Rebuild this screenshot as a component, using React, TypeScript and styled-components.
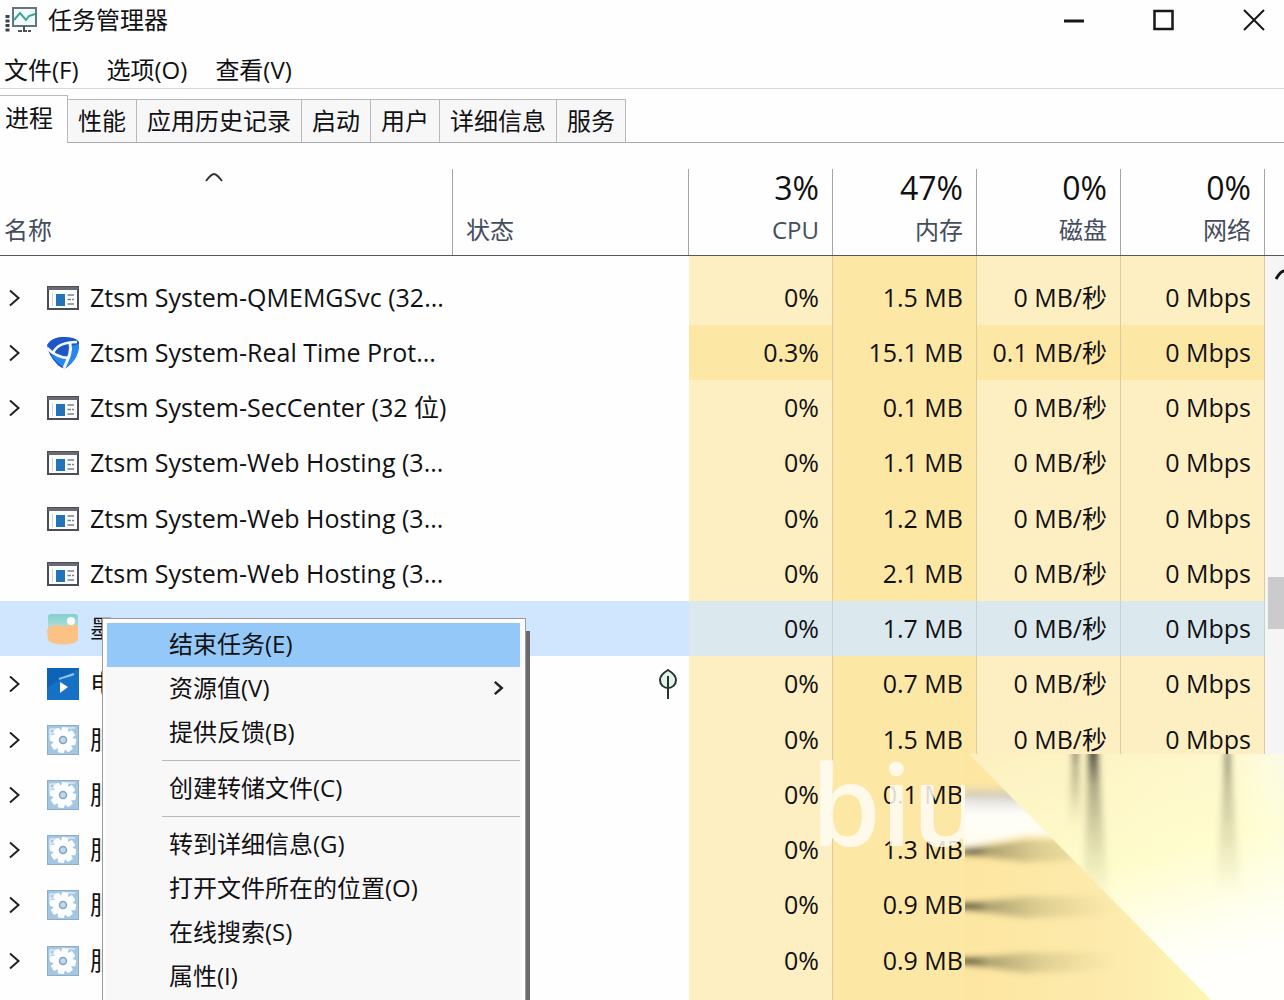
import React from "react";
import styled, { createGlobalStyle, css } from "styled-components";

const uiFont = `"Open Sans", "Noto Sans CJK SC", sans-serif`;

const GlobalStyle = createGlobalStyle`
  *, *::before, *::after { box-sizing: border-box; }
  html, body { margin: 0; height: 100%; overflow: hidden; }
  body { background: #fefefe; color: #111114; font-family: ${uiFont}; font-size: 24px; line-height: 32px; }
  #root { height: 100%; }
  button { font: inherit; color: inherit; background: none; border: 0; padding: 0; margin: 0; text-align: left; }
`;

const Window = styled.main`
  position: relative;
  display: flex;
  flex-direction: column;
  height: 100vh;
  overflow: hidden;
`;

const TitleBar = styled.header`
  display: flex;
  align-items: center;
  height: 40px;
  padding-left: 4px;
  gap: 10px;
`;

const Title = styled.h1`
  flex: 1;
  margin: 0;
  font-size: 24px;
  font-weight: 400;
`;

const WindowButton = styled.button`
  display: flex;
  align-items: center;
  justify-content: center;
  width: 60px;
  height: 40px;
`;

const WindowButtons = styled.div`
  display: flex;
  gap: 30px;
`;

const MenuBar = styled.nav`
  display: flex;
  align-items: center;
  gap: 28px;
  height: 49px;
  padding: 12px 4px 0;
  border-bottom: 1px solid #d9d9dc;
`;

const Tabs = styled.div`
  display: flex;
  align-items: flex-end;
  height: 54px;
  padding-top: 6px;
  &::after {
    content: "";
    flex: 1;
    border-bottom: 1px solid #a9a9ac;
  }
`;

const Tab = styled.button<{ $active?: boolean }>`
  height: 44px;
  padding: 0 10px;
  border: 1px solid #b9b9bc;
  border-left: 0;
  border-bottom-color: #a9a9ac;
  background: #f7f7f7;
  white-space: nowrap;
  ${(p) =>
    p.$active &&
    css`
      height: 48px;
      padding: 0 14px 4px 5px;
      border-bottom: 0;
      background: #fefefe;
    `}
`;

const Body = styled.section`
  display: flex;
  flex: 1;
  min-height: 0;
  overflow: hidden;
`;

const Table = styled.table`
  flex: 1;
  min-width: 0;
  table-layout: fixed;
  border-collapse: separate;
  border-spacing: 0;
  align-self: flex-start;
`;

const Col = styled.col<{ $width?: number }>`
  width: ${(p) => (p.$width ? `${p.$width}px` : "auto")};
`;

const HeadCell = styled.th<{ $metric?: boolean }>`
  height: 113px;
  padding: 0;
  border-bottom: 1px solid #55555a;
  font-weight: 400;
  text-align: ${(p) => (p.$metric ? "right" : "left")};
  vertical-align: bottom;
`;

const HeadInner = styled.div<{ $first?: boolean }>`
  display: flex;
  flex-direction: column;
  justify-content: space-between;
  height: 86px;
  padding: ${(p) => (p.$first ? "0 13px 9px 4px" : "0 13px 9px")};
  border-right: 1px solid #a4a4aa;
`;

const Total = styled.span`
  font-size: 32px;
  line-height: 38px;
`;

const HeadLabel = styled.span`
  color: #454d5c;
  line-height: 32px;
`;

const SortMark = styled.span`
  display: flex;
  justify-content: center;
  height: 16px;
  padding-top: 3px;
  padding-right: 16px;
`;

const Row = styled.tr<{ $selected?: boolean }>`
  height: 55px;
  background: ${(p) => (p.$selected ? "#cfe6fe" : "transparent")};
  &:nth-child(4n + 1) {
    height: 56px;
  }
  &:first-child,
  &:last-child {
    height: 14px;
  }
`;

const tones = {
  low: "#fdefc1",
  mid: "#fde7a4",
  selected: "#dbe9ee",
};

const Cell = styled.td`
  padding: 0;
  overflow: hidden;
  white-space: nowrap;
`;

const Value = styled(Cell)<{ $tone: keyof typeof tones }>`
  padding: 0 13px 2px 0;
  font-size: 25px;
  text-align: right;
  background: ${(p) => tones[p.$tone]};
  border-right: 1px solid ${(p) => (p.$tone === "selected" ? "#c5d3d3" : "#dccb9c")};
`;

const NameLine = styled.div`
  display: grid;
  grid-template-columns: 32px 32px 1fr;
  column-gap: 11px;
  align-items: center;
  padding-left: 4px;
`;

const NameText = styled.span`
  padding-bottom: 2px;
  font-size: 25px;
`;

const StatusLine = styled.div`
  display: flex;
  justify-content: flex-end;
  padding-right: 11px;
`;

const Expand = styled.button`
  display: flex;
  padding-left: 4px;
`;

const ScrollBar = styled.aside`
  display: flex;
  flex-direction: column;
  width: 19px;
  background: #f5f5f6;
`;

const ScrollHead = styled.div`
  height: 113px;
  border-bottom: 1px solid #55555a;
  background: #fefefe;
`;

const ScrollUp = styled.button`
  display: flex;
  height: 40px;
  padding: 12px 0 0 10px;
  overflow: hidden;
  svg {
    flex-shrink: 0;
  }
`;

const ScrollThumb = styled.div`
  height: 52px;
  margin: 281px 0 0 3px;
  background: #cbcbcd;
`;

const ContextMenu = styled.div`
  position: absolute;
  left: 102px;
  top: 618px;
  width: 424px;
  padding: 4px 5px 4px 4px;
  border: 1px solid #9a9a9e;
  background: #f9f8f9;
  box-shadow: inset 0 0 0 3px #fdfdfd, 5px 12px 0 -1px #6a6a6e;
`;

const MenuItem = styled.button<{ $active?: boolean }>`
  display: flex;
  align-items: center;
  justify-content: space-between;
  width: 100%;
  height: 44px;
  padding: 0 16px 2px 62px;
  background: ${(p) => (p.$active ? "#94c8f8" : "transparent")};
`;

const Separator = styled.hr`
  height: 1px;
  margin: 5px 0 6px 55px;
  border: 0;
  background: #b9b9bc;
`;

const Smear = styled.svg`
  position: absolute;
  left: 965px;
  top: 754px;
  width: 319px;
  height: 246px;
`;

const Watermark = styled.div`
  position: absolute;
  left: 811px;
  top: 758px;
  color: #fffdf4;
  opacity: 0.85;
  font-size: 112px;
  font-weight: 600;
  line-height: 90px;
`;

const Chevron = ({ size = 22, weight = 2 }: { size?: number; weight?: number }) => (
  <svg width={size / 2 + 2} height={size} viewBox="0 0 13 22" fill="none" stroke="#222226" strokeWidth={weight}>
    <path d="M2 3.500 L10.500 11 L2 18.500" />
  </svg>
);

const AppGlyph = () => (
  <svg width="32" height="24" viewBox="0 0 32 24">
    <rect x="1" y="1" width="30" height="22" fill="#fbfcfd" stroke="#4b4c55" strokeWidth="2" />
    <path d="M1 2.500H31" stroke="#6a6a70" strokeWidth="3" />
    <path d="M5.500 7V20" stroke="#c8d5de" />
    <rect x="9" y="8" width="9" height="12" fill="#2473b8" />
    <path d="M20.500 9H27M20.500 13.500H24M25 13.500H27M20.500 18H27" stroke="#7b8288" strokeWidth="1.500" />
  </svg>
);

const ShieldGlyph = () => (
  <svg width="32" height="32" viewBox="0 0 32 32">
    <path d="M0 8 C4 1 11 0 16 0 C23 0 30 1 32 5 C33 15 28 25 19 31 C16 32 12 30 9 26 C4 21 1 15 0 8Z" fill="#1c56c8" />
    <path d="M4 18 C9 25 14 28 17 31 C27 27 32 17 32 7 L25 9 L19 22Z" fill="#2787ee" />
    <path d="M0 11 C5 16 11 21 22 21" fill="none" stroke="#f4faff" strokeWidth="3" />
    <path d="M6 16 C9 9 16 5 30 5" fill="none" stroke="#f4faff" strokeWidth="2.500" />
    <path d="M23 6 C25 15 21 22 17 31" fill="none" stroke="#f4faff" strokeWidth="3" />
  </svg>
);

const PhotoGlyph = () => (
  <svg width="32" height="32" viewBox="0 0 32 32">
    <defs>
      <linearGradient id="sky" x1="0" y1="0" x2="0" y2="1">
        <stop offset="0" stopColor="#84ced1" />
        <stop offset="1" stopColor="#d3ead8" />
      </linearGradient>
    </defs>
    <rect x="1" y="1" width="30" height="24" rx="3" fill="url(#sky)" />
    <path d="M0 18 C3 10 12 12 17 14 C22 11 30 10 31 15 V27 C27 33 5 33 1 27Z" fill="#fcc184" />
    <circle cx="24" cy="8" r="4" fill="#fdfefa" />
  </svg>
);

const MovieGlyph = () => (
  <svg width="32" height="32" viewBox="0 0 32 32">
    <rect width="32" height="32" fill="#0c63b8" />
    <path d="M0 20 L32 0 V32 H0Z" fill="#1670c4" />
    <path d="M12 11 C17 9 22 8 27 6" fill="none" stroke="#8fc3f0" strokeWidth="2" />
    <path d="M13 14 L21 19 L13 25Z" fill="#fff" />
  </svg>
);

const GearGlyph = () => (
  <svg width="32" height="32" viewBox="0 0 32 32">
    <rect x="0.500" y="1.500" width="31" height="29" fill="#a3c6e2" stroke="#8eacc5" />
    <path d="M3 5H13M3 9H8M3 5V15M20 4H28" fill="none" stroke="#dceaf5" strokeWidth="1.500" />
    <g transform="translate(16 16)" fill="#fbfdff">
      {[10, 55, 100, 145].map((a) => (
        <path key={a} d="M-3 -13H3L4 -7V7L3 13H-3L-4 7V-7Z" transform={`rotate(${a})`} />
      ))}
      <circle r="8.500" />
      <circle r="3.500" fill="#c3d8e8" stroke="#83a3bd" strokeWidth="1.500" />
    </g>
  </svg>
);

const LeafGlyph = () => (
  <svg width="20" height="32" viewBox="0 0 20 32" fill="none" stroke="#26352d" strokeWidth="2">
    <path d="M10 2 C15 5 18 8 18 12 C18 17 14 20 10 20 C6 20 2 17 2 12 C2 8 5 5 10 2Z" fill="#e4f3ea" />
    <path d="M10 8V31" />
  </svg>
);

const TaskManagerGlyph = () => (
  <svg width="34" height="28" viewBox="0 0 34 28" fill="none">
    <path d="M3.500 9V27" stroke="#3d4347" strokeWidth="4" strokeDasharray="3 1.500" />
    <rect x="9" y="2" width="23" height="18" fill="#f2fbfb" stroke="#62767f" strokeWidth="2" />
    <path d="M10 14 L16 7 L22 14 L25 10 L31 8" stroke="#3ba598" strokeWidth="2" />
    <path d="M20 20V24M14 25H27" stroke="#4a5459" strokeWidth="2" strokeDasharray="4 1" />
  </svg>
);

const glyphs = {
  app: AppGlyph,
  shield: ShieldGlyph,
  photo: PhotoGlyph,
  movie: MovieGlyph,
  gear: GearGlyph,
};

type Process = {
  name: string;
  glyph: keyof typeof glyphs;
  expandable?: boolean;
  selected?: boolean;
  busy?: boolean;
  leaf?: boolean;
  values: string[];
};

const processes: Process[] = [
  { name: "Ztsm System-QMEMGSvc (32...", glyph: "app", expandable: true, values: ["0%", "1.5 MB", "0 MB/秒", "0 Mbps"] },
  { name: "Ztsm System-Real Time Prot...", glyph: "shield", expandable: true, busy: true, values: ["0.3%", "15.1 MB", "0.1 MB/秒", "0 Mbps"] },
  { name: "Ztsm System-SecCenter (32 位)", glyph: "app", expandable: true, values: ["0%", "0.1 MB", "0 MB/秒", "0 Mbps"] },
  { name: "Ztsm System-Web Hosting (3...", glyph: "app", values: ["0%", "1.1 MB", "0 MB/秒", "0 Mbps"] },
  { name: "Ztsm System-Web Hosting (3...", glyph: "app", values: ["0%", "1.2 MB", "0 MB/秒", "0 Mbps"] },
  { name: "Ztsm System-Web Hosting (3...", glyph: "app", values: ["0%", "2.1 MB", "0 MB/秒", "0 Mbps"] },
  { name: "墨", glyph: "photo", selected: true, values: ["0%", "1.7 MB", "0 MB/秒", "0 Mbps"] },
  { name: "电", glyph: "movie", expandable: true, leaf: true, values: ["0%", "0.7 MB", "0 MB/秒", "0 Mbps"] },
  { name: "服", glyph: "gear", expandable: true, values: ["0%", "1.5 MB", "0 MB/秒", "0 Mbps"] },
  { name: "服", glyph: "gear", expandable: true, values: ["0%", "0.1 MB", "", ""] },
  { name: "服", glyph: "gear", expandable: true, values: ["0%", "1.3 MB", "", ""] },
  { name: "服", glyph: "gear", expandable: true, values: ["0%", "0.9 MB", "", ""] },
  { name: "服", glyph: "gear", expandable: true, values: ["0%", "0.9 MB", "", ""] },
];

const metrics = [
  ["3%", "CPU"],
  ["47%", "内存"],
  ["0%", "磁盘"],
  ["0%", "网络"],
];

const menuGroups = [
  ["结束任务(E)", "资源值(V)", "提供反馈(B)"],
  ["创建转储文件(C)"],
  ["转到详细信息(G)", "打开文件所在的位置(O)", "在线搜索(S)", "属性(I)"],
];

const toneOf = (p: Process, column: number): keyof typeof tones =>
  p.selected ? "selected" : column === 1 || p.busy ? "mid" : "low";

function ProcessRow({ process }: { process: Process }) {
  const Glyph = glyphs[process.glyph];
  return (
    <Row $selected={process.selected}>
      <Cell>
        <NameLine>
          {process.expandable ? (
            <Expand aria-label="展开">
              <Chevron />
            </Expand>
          ) : (
            <span />
          )}
          <Glyph />
          <NameText>{process.name}</NameText>
        </NameLine>
      </Cell>
      <Cell>
        <StatusLine>{process.leaf && <LeafGlyph />}</StatusLine>
      </Cell>
      {process.values.map((value, i) => (
        <Value key={i} $tone={toneOf(process, i)}>
          {value}
        </Value>
      ))}
    </Row>
  );
}

function PartialRow() {
  return (
    <Row>
      <Cell />
      <Cell />
      <Value $tone="low" />
      <Value $tone="mid" />
      <Value $tone="low" />
      <Value $tone="low" />
    </Row>
  );
}

function SmearDrawing() {
  return (
    <Smear viewBox="0 0 319 246" aria-hidden="true">
      <defs>
        <linearGradient id="right" x1="0" y1="0" x2="1" y2="0">
          <stop offset="0" stopColor="#fdefbf" />
          <stop offset="0.450" stopColor="#fdf2c2" />
          <stop offset="0.850" stopColor="#fef4cc" />
          <stop offset="0.950" stopColor="#fcf9ec" />
          <stop offset="1" stopColor="#f6f6fa" />
        </linearGradient>
        <linearGradient id="fade" x1="0" y1="0" x2="0.350" y2="1">
          <stop offset="0" stopColor="#ffffd2" stopOpacity="0" />
          <stop offset="0.550" stopColor="#ffffce" stopOpacity="0.750" />
          <stop offset="0.850" stopColor="#fffff0" />
          <stop offset="1" stopColor="#fffffb" />
        </linearGradient>
        <linearGradient id="left" x1="0" y1="0" x2="1" y2="0">
          <stop offset="0" stopColor="#fde6a0" />
          <stop offset="0.500" stopColor="#fdebae" />
          <stop offset="1" stopColor="#ffffb8" />
        </linearGradient>
        <linearGradient id="sideways" gradientUnits="userSpaceOnUse" x1="0" y1="0" x2="150" y2="0">
          <stop offset="0" stopColor="#2c2a1c" stopOpacity="0.950" />
          <stop offset="0.160" stopColor="#77734e" stopOpacity="0.600" />
          <stop offset="0.500" stopColor="#a39c68" stopOpacity="0.350" />
          <stop offset="1" stopColor="#b8b079" stopOpacity="0" />
        </linearGradient>
        <linearGradient id="down" x1="0" y1="0" x2="0" y2="1">
          <stop offset="0" stopColor="#1e1d18" stopOpacity="0.950" />
          <stop offset="0.250" stopColor="#79765a" stopOpacity="0.600" />
          <stop offset="1" stopColor="#c8c48e" stopOpacity="0" />
        </linearGradient>
        <linearGradient id="glare" x1="0" y1="0" x2="0" y2="1">
          <stop offset="0" stopColor="#c9c5b8" stopOpacity="0.100" />
          <stop offset="0.200" stopColor="#e2e0dc" />
          <stop offset="0.450" stopColor="#fffef8" />
          <stop offset="1" stopColor="#fffdf0" />
        </linearGradient>
        <filter id="softX" x="-100%" y="-20%" width="300%" height="140%">
          <feGaussianBlur stdDeviation="3 1" />
        </filter>
        <filter id="softY" x="-20%" y="-100%" width="140%" height="300%">
          <feGaussianBlur stdDeviation="1 3" />
        </filter>
        <clipPath id="lower">
          <path d="M0 0 H4 L246 246 H0Z" />
        </clipPath>
        <clipPath id="upper">
          <path d="M3 0 H319 V246 H245Z" />
        </clipPath>
      </defs>
      <g clipPath="url(#upper)">
        <rect width="319" height="246" fill="url(#right)" />
        <rect width="319" height="246" fill="url(#fade)" />
        <g filter="url(#softX)" fill="url(#down)">
          <path d="M109 -8 H112 L118 75 H102Z" />
          <path d="M124 -8 H132 L144 150 H118Z" />
          <path d="M261 -8 H264 L276 145 H250Z" opacity="0.750" />
        </g>
      </g>
      <g clipPath="url(#lower)">
        <rect width="319" height="246" fill="url(#left)" />
        <g filter="url(#softY)">
          <path d="M-6 32 H120 V82 H60 L-6 94Z" fill="url(#glare)" />
          <g fill="url(#sideways)">
            <path d="M-4 40 L60 36 V48 L-4 41Z" opacity="0.250" />
            <path d="M-4 95 L60 86 L150 84 V106 L60 108 L-4 99Z" />
            <path d="M-4 150 L60 143 L150 142 V162 L60 164 L-4 154Z" />
            <path d="M-4 205 L60 199 L150 198 V216 L60 219 L-4 209Z" />
          </g>
        </g>
      </g>
    </Smear>
  );
}

export default function App() {
  return (
    <>
      <GlobalStyle />
      <Window>
        <TitleBar>
          <TaskManagerGlyph />
          <Title>任务管理器</Title>
          <WindowButtons>
            <WindowButton aria-label="最小化">
              <svg width="20" height="24" viewBox="0 0 20 24" stroke="#17171a" strokeWidth="3">
                <path d="M0 13H20" />
              </svg>
            </WindowButton>
            <WindowButton aria-label="最大化">
              <svg width="22" height="22" viewBox="0 0 22 22" fill="none" stroke="#17171a" strokeWidth="2.500">
                <rect x="1.500" y="2" width="18" height="18" />
              </svg>
            </WindowButton>
            <WindowButton aria-label="关闭">
              <svg width="22" height="22" viewBox="0 0 22 22" stroke="#17171a" strokeWidth="2">
                <path d="M1 1L21 21M21 1L1 21" />
              </svg>
            </WindowButton>
          </WindowButtons>
        </TitleBar>

        <MenuBar>
          <button>文件(F)</button>
          <button>选项(O)</button>
          <button>查看(V)</button>
        </MenuBar>

        <Tabs>
          <Tab $active>进程</Tab>
          {["性能", "应用历史记录", "启动", "用户", "详细信息", "服务"].map((label) => (
            <Tab key={label}>{label}</Tab>
          ))}
        </Tabs>

        <Body>
          <Table>
            <colgroup>
              <Col $width={453} />
              <Col />
              {metrics.map(([, label]) => (
                <Col key={label} $width={144} />
              ))}
            </colgroup>
            <thead>
              <tr>
                <HeadCell>
                  <HeadInner $first>
                    <SortMark>
                      <svg width="18" height="10" viewBox="0 0 18 10" fill="none" stroke="#333" strokeWidth="2">
                        <path d="M1 9 C4 5 7 2 9 2 C11 2 14 5 17 9" />
                      </svg>
                    </SortMark>
                    <HeadLabel>名称</HeadLabel>
                  </HeadInner>
                </HeadCell>
                <HeadCell>
                  <HeadInner>
                    <span />
                    <HeadLabel>状态</HeadLabel>
                  </HeadInner>
                </HeadCell>
                {metrics.map(([total, label]) => (
                  <HeadCell key={label} $metric>
                    <HeadInner>
                      <Total>{total}</Total>
                      <HeadLabel>{label}</HeadLabel>
                    </HeadInner>
                  </HeadCell>
                ))}
              </tr>
            </thead>
            <tbody>
              <PartialRow />
              {processes.map((process, i) => (
                <ProcessRow key={i} process={process} />
              ))}
              <PartialRow />
            </tbody>
          </Table>
          <ScrollBar>
            <ScrollHead />
            <ScrollUp aria-label="向上滚动">
              <svg width="18" height="12" viewBox="0 0 18 12" fill="none" stroke="#17171a" strokeWidth="3">
                <path d="M1 11 C4 6 7 3 9 3 C11 3 14 6 17 11" />
              </svg>
            </ScrollUp>
            <ScrollThumb />
          </ScrollBar>
        </Body>

        <Watermark>biu</Watermark>
        <SmearDrawing />

        <ContextMenu>
          {menuGroups.map((group, g) => (
            <React.Fragment key={g}>
              {g > 0 && <Separator />}
              {group.map((label) => (
                <MenuItem key={label} $active={label === "结束任务(E)"}>
                  {label}
                  {label === "资源值(V)" && <Chevron size={18} weight={3} />}
                </MenuItem>
              ))}
            </React.Fragment>
          ))}
        </ContextMenu>
      </Window>
    </>
  );
}
